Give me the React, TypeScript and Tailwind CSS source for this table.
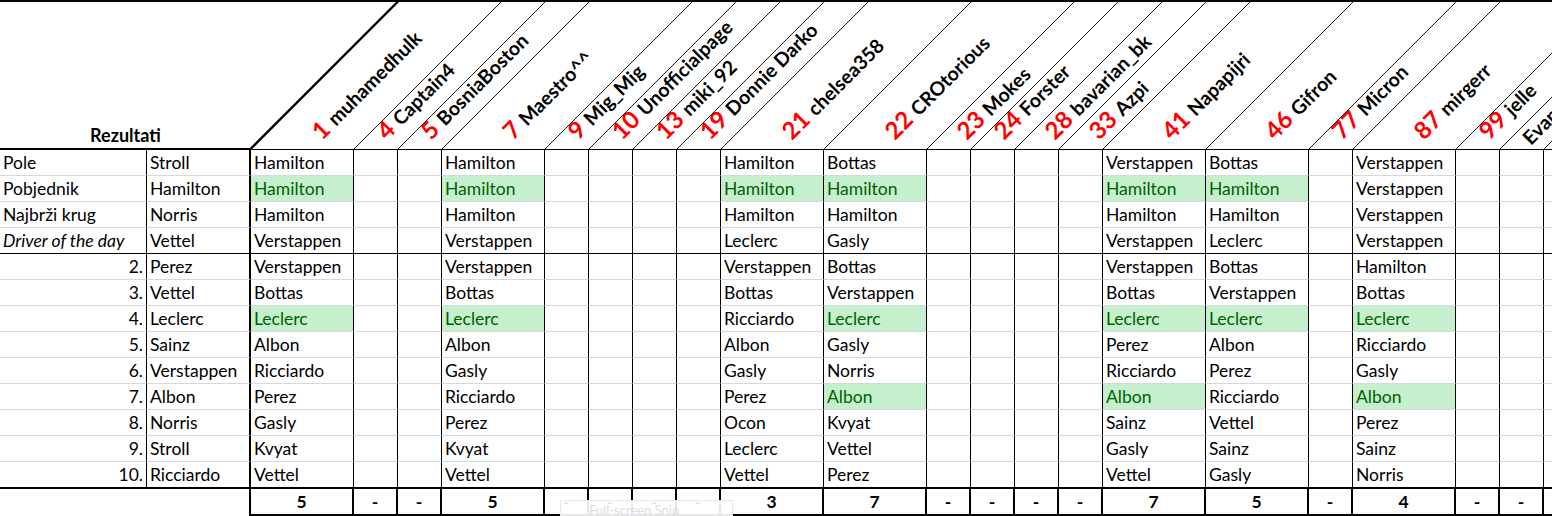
type Col = {
  num: string
  name: string
  wide: boolean
  pos: string
  total: string
  picks?: string[]
  good?: number[]
}

const rowLabels = ['Pole', 'Pobjednik', 'Najbrži krug', 'Driver of the day', '2.', '3.', '4.', '5.', '6.', '7.', '8.', '9.', '10.']
const results = ['Stroll', 'Hamilton', 'Norris', 'Vettel', 'Perez', 'Vettel', 'Leclerc', 'Sainz', 'Verstappen', 'Albon', 'Norris', 'Stroll', 'Ricciardo']

const cols: Col[] = [
  {
    num: '1', name: 'muhamedhulk', wide: true, pos: 'bottom-[6px] left-[73px]', total: '5', good: [1, 6],
    picks: ['Hamilton', 'Hamilton', 'Hamilton', 'Verstappen', 'Verstappen', 'Bottas', 'Leclerc', 'Albon', 'Ricciardo', 'Perez', 'Gasly', 'Kvyat', 'Vettel'],
  },
  { num: '4', name: 'Captain4', wide: false, pos: 'bottom-[6px] left-[35px]', total: '-' },
  { num: '5', name: 'BosniaBoston', wide: false, pos: 'bottom-[6px] left-[35px]', total: '-' },
  {
    num: '7', name: 'Maestro^^', wide: true, pos: 'bottom-[6px] left-[73px]', total: '5', good: [1, 6],
    picks: ['Hamilton', 'Hamilton', 'Hamilton', 'Verstappen', 'Verstappen', 'Bottas', 'Leclerc', 'Albon', 'Gasly', 'Ricciardo', 'Perez', 'Kvyat', 'Vettel'],
  },
  { num: '9', name: 'Mig_Mig', wide: false, pos: 'bottom-[6px] left-[35px]', total: '-' },
  { num: '10', name: 'Unofficialpage', wide: false, pos: 'bottom-[6px] left-[35px]', total: '-' },
  { num: '13', name: 'miki_92', wide: false, pos: 'bottom-[6px] left-[35px]', total: '-' },
  { num: '19', name: 'Donnie Darko', wide: false, pos: 'bottom-[6px] left-[35px]', total: '-' },
  {
    num: '21', name: 'chelsea358', wide: true, pos: 'bottom-[6px] left-[73px]', total: '3', good: [1],
    picks: ['Hamilton', 'Hamilton', 'Hamilton', 'Leclerc', 'Verstappen', 'Bottas', 'Ricciardo', 'Albon', 'Gasly', 'Perez', 'Ocon', 'Leclerc', 'Vettel'],
  },
  {
    num: '22', name: 'CROtorious', wide: true, pos: 'bottom-[6px] left-[73px]', total: '7', good: [1, 6, 9],
    picks: ['Bottas', 'Hamilton', 'Hamilton', 'Gasly', 'Bottas', 'Verstappen', 'Leclerc', 'Gasly', 'Norris', 'Albon', 'Kvyat', 'Vettel', 'Perez'],
  },
  { num: '23', name: 'Mokes', wide: false, pos: 'bottom-[6px] left-[42px]', total: '-' },
  { num: '24', name: 'Forster', wide: false, pos: 'bottom-[6px] left-[35px]', total: '-' },
  { num: '28', name: 'bavarian_bk', wide: false, pos: 'bottom-[6px] left-[42px]', total: '-' },
  { num: '33', name: 'Azpi', wide: false, pos: 'bottom-[6px] left-[42px]', total: '-' },
  {
    num: '41', name: 'Napapijri', wide: true, pos: 'bottom-[6px] left-[71px]', total: '7', good: [1, 6, 9],
    picks: ['Verstappen', 'Hamilton', 'Hamilton', 'Verstappen', 'Verstappen', 'Bottas', 'Leclerc', 'Perez', 'Ricciardo', 'Albon', 'Sainz', 'Gasly', 'Vettel'],
  },
  {
    num: '46', name: 'Gifron', wide: true, pos: 'bottom-[6px] left-[71px]', total: '5', good: [1, 6],
    picks: ['Bottas', 'Hamilton', 'Hamilton', 'Leclerc', 'Bottas', 'Verstappen', 'Leclerc', 'Albon', 'Perez', 'Ricciardo', 'Vettel', 'Sainz', 'Gasly'],
  },
  { num: '77', name: 'Micron', wide: false, pos: 'bottom-[6px] left-[35px]', total: '-' },
  {
    num: '87', name: 'mirgerr', wide: true, pos: 'bottom-[6px] left-[73px]', total: '4', good: [6, 9],
    picks: ['Verstappen', 'Verstappen', 'Verstappen', 'Verstappen', 'Hamilton', 'Bottas', 'Leclerc', 'Ricciardo', 'Gasly', 'Albon', 'Perez', 'Sainz', 'Norris'],
  },
  { num: '99', name: 'jelle', wide: false, pos: 'bottom-[6px] left-[35px]', total: '-' },
  { num: '', name: 'Evans', wide: false, pos: 'bottom-[1px] left-[33px]', total: '-' },
  { num: '', name: '', wide: true, pos: '', total: '' },
]

// x of every column border in the header, for the slanted lines
const borders: number[] = []
{
  let x = 251
  for (const c of cols) {
    x += c.wide ? 103 : 44
    borders.push(x - 0.5)
  }
}

const rowLine = (r: number) =>
  r === 3 ? 'border-b border-b-black' : r === 12 ? 'border-b-2 border-b-black' : 'border-b border-b-[#d5d8dd]'

export default function App() {
  return (
    <div className="relative h-[516px] w-[1552px] overflow-hidden bg-white text-[17.5px] text-black [font-family:Lato,sans-serif]">
      {/* Header */}
      <div className="relative flex border-t-2 border-black">
        <div className="flex h-[148px] w-[251px] shrink-0 items-end justify-center border-b-2 border-black">
          <span className="text-[18px] font-bold leading-[25px]">Rezultati</span>
        </div>
        {cols.map((c, i) => (
          <div
            key={i}
            className={`relative h-[148px] shrink-0 border-b border-black ${c.wide ? 'w-[103px]' : 'w-[44px]'}`}
          >
            {c.name && (
              <div
                className={`absolute ${c.pos} origin-bottom-left -rotate-45 whitespace-nowrap text-[24px] font-bold leading-none`}
              >
                {c.num && <span className="mr-[6px] text-[#ff0000]">{c.num}</span>}
                <span className="text-[19.5px]">{c.name}</span>
              </div>
            )}
          </div>
        ))}
        <svg className="pointer-events-none absolute -top-[2px] left-0" width={1552} height={150}>
          <line x1={250} y1={149.5} x2={398} y2={1.5} stroke="#000" strokeWidth={2.4} />
          {borders.map((b) => (
            <line key={b} x1={b} y1={149.5} x2={b + 148} y2={1.5} stroke="#000" strokeWidth={0.9} />
          ))}
        </svg>
      </div>

      {/* Rows */}
      {rowLabels.map((label, r) => (
        <div key={r} className={`flex ${r === 12 ? 'h-[27px]' : 'h-[26px]'}`}>
          <div
            className={`h-full w-[147px] shrink-0 truncate border-r border-r-black px-[3px] leading-[25px] ${rowLine(r)} ${
              r >= 4 ? 'text-right' : ''
            } ${r === 3 ? 'italic' : ''}`}
          >
            {label}
          </div>
          <div className={`h-full w-[104px] shrink-0 border-r-2 border-r-black px-[3px] leading-[25px] ${rowLine(r)}`}>
            {results[r]}
          </div>
          {cols.map((c, i) => {
            const good = c.good?.includes(r) && r !== 12
            return (
              <div
                key={i}
                className={`h-full shrink-0 overflow-hidden whitespace-nowrap border-r border-r-black px-[3px] leading-[25px] ${
                  c.wide ? 'w-[103px]' : 'w-[44px]'
                } ${rowLine(r)} ${good ? 'border-b-[#c6efce] bg-[#c6efce] text-[#006100]' : ''}`}
              >
                {c.picks?.[r]}
              </div>
            )
          })}
        </div>
      ))}

      {/* Totals */}
      <div className="flex h-[27px]">
        <div className="h-full w-[251px] shrink-0 border-r-2 border-black" />
        {cols.map((c, i) => (
          <div
            key={i}
            className={`h-full shrink-0 border-b-2 border-r-2 border-black text-center font-bold leading-[25px] ${
              c.wide ? 'w-[103px]' : 'w-[44px]'
            }`}
          >
            {c.total}
          </div>
        ))}
      </div>

      {/* snipping tool hint */}
      <div className="absolute left-[560px] top-[500px] h-[20px] w-[173px] border border-[#e6e9ee] bg-white/90 pl-[28px] text-[13px] leading-[18px] text-[#d9dee6]">
        Full-screen Snip
      </div>
    </div>
  )
}
